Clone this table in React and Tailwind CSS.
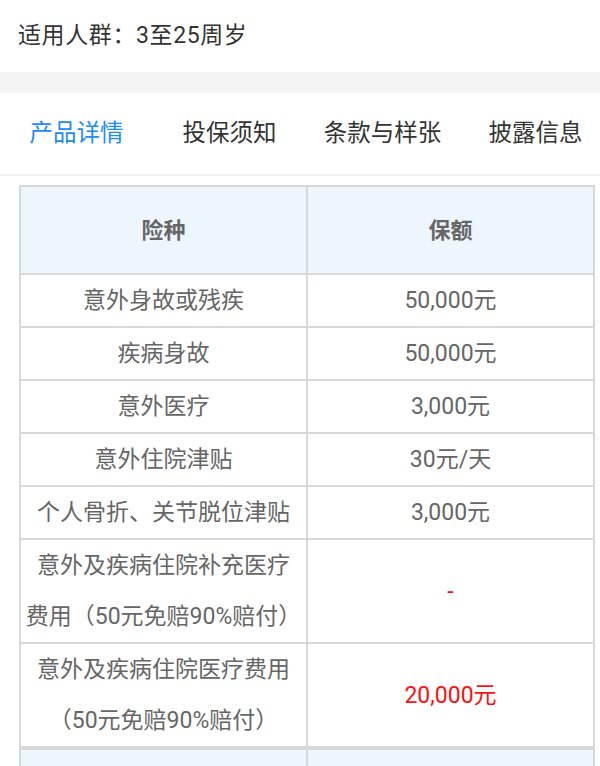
import React from "react";

const tabs = ["产品详情", "投保须知", "条款与样张", "披露信息"];

const rows = [
  { name: ["意外身故或残疾"], amount: "50,000元" },
  { name: ["疾病身故"], amount: "50,000元" },
  { name: ["意外医疗"], amount: "3,000元" },
  { name: ["意外住院津贴"], amount: "30元/天" },
  { name: ["个人骨折、关节脱位津贴"], amount: "3,000元" },
  { name: ["意外及疾病住院补充医疗", "费用（50元免赔90%赔付）"], amount: "-", red: true },
  { name: ["意外及疾病住院医疗费用", "（50元免赔90%赔付）"], amount: "20,000元", red: true },
];

const cell = "border-2 border-[#d8d8d8] text-center align-middle";

const App = () => {
  return (
    <div className="w-[600px] h-[766px] overflow-hidden bg-white font-['Roboto','Noto_Sans_CJK_SC',sans-serif]">
      <div className="h-[72px] flex items-center pl-[18px] text-[23px] tracking-[0.6px] text-[#333]">
        适用人群：3至25周岁
      </div>
      <div className="h-[21px] bg-[#f4f4f4]" />

      <div className="flex overflow-hidden border-b-2 border-[#f2f2f2]">
        {tabs.map((t, i) => (
          <div
            key={t}
            className={
              "w-[153px] shrink-0 h-[83px] flex items-center justify-center text-[23.5px] -mb-[2px] border-b-2 " +
              (i === 0 ? "text-[#1b8cf0] border-[#1b8cf0]" : "text-[#333] border-transparent")
            }
          >
            {t}
          </div>
        ))}
      </div>

      <table className="ml-[19px] mt-[9px] w-[576px] border-collapse table-fixed text-[23px] text-[#666]">
        <colgroup>
          <col className="w-[287px]" />
          <col />
        </colgroup>
        <thead>
          <tr className="bg-[#eef6fd] h-[88px]">
            <th className={cell + " font-bold text-[22px]"}>险种</th>
            <th className={cell + " font-bold text-[22px]"}>保额</th>
          </tr>
        </thead>
        <tbody>
          {rows.map((r) => (
            <tr key={r.name.join("")}>
              <td className={cell + " leading-[51px] px-[4px] whitespace-nowrap"}>
                {r.name.map((line) => (
                  <div key={line}>{line}</div>
                ))}
              </td>
              <td className={cell + " leading-[51px] " + (r.red ? "text-[#ff0f0f]" : "")}>
                {r.amount}
              </td>
            </tr>
          ))}
        </tbody>
      </table>

      <table className="ml-[19px] w-[576px] border-collapse table-fixed text-[22px] text-[#666]">
        <colgroup>
          <col className="w-[287px]" />
          <col />
        </colgroup>
        <tbody>
          <tr className="bg-[#eef6fd] h-[88px]">
            <td className={cell}></td>
            <td className={cell}></td>
          </tr>
        </tbody>
      </table>
    </div>
  );
};

export default App;
